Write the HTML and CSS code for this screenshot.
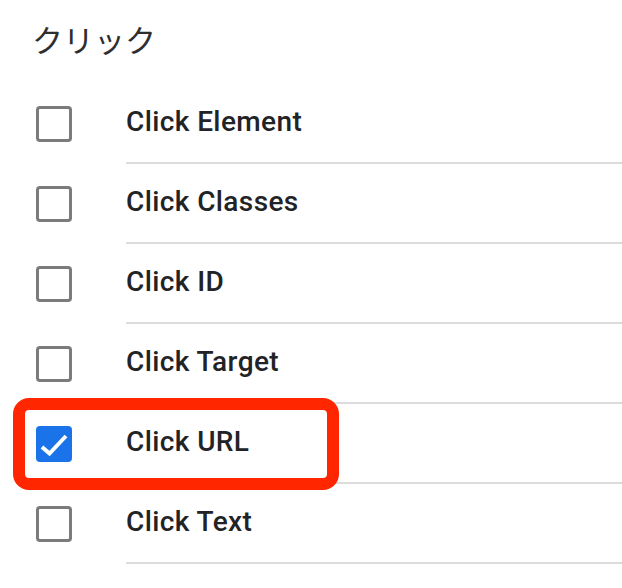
FILE: index.html
```html
<!DOCTYPE html>
<html lang="ja">
<head>
<meta charset="utf-8">
<link rel="stylesheet" href="styles.css">
</head>
<body>
<div class="panel">
  <div class="title">クリック</div>
  <ul class="list">
    <li class="row">
      <span class="cb"><span class="box"></span></span>
      <span class="label">Click Element</span>
    </li>
    <li class="row">
      <span class="cb"><span class="box"></span></span>
      <span class="label">Click Classes</span>
    </li>
    <li class="row">
      <span class="cb"><span class="box"></span></span>
      <span class="label">Click ID</span>
    </li>
    <li class="row">
      <span class="cb"><span class="box"></span></span>
      <span class="label">Click Target</span>
    </li>
    <li class="row highlighted">
      <span class="cb"><span class="box checked">
        <svg viewBox="0 0 36 36" width="36" height="36"><polyline points="6,21 13.5,27.5 30,10" fill="none" stroke="#fff" stroke-width="4"/></svg>
      </span></span>
      <span class="label">Click URL</span>
      <span class="mark"></span>
    </li>
    <li class="row">
      <span class="cb"><span class="box"></span></span>
      <span class="label">Click Text</span>
    </li>
  </ul>
</div>
</body>
</html>
```
FILE: styles.css
```css
html, body {
  margin: 0;
  padding: 0;
  background: #ffffff;
}
.panel {
  width: 622px;
  height: 588px;
  overflow: hidden;
}
.title {
  font-family: "Noto Sans CJK JP", "Noto Sans", sans-serif;
  font-size: 31px;
  line-height: 32px;
  font-weight: 400;
  color: #2e2e2e;
  padding: 23px 0 0 32px;
  height: 61px;
}
.list {
  list-style: none;
  margin: 0;
  padding: 0;
}
.row {
  position: relative;
  display: flex;
  height: 80px;
}
.cb {
  width: 126px;
  padding-left: 36px;
  box-sizing: border-box;
  display: flex;
  align-items: center;
  flex: none;
}
.box {
  width: 36px;
  height: 36px;
  box-sizing: border-box;
  border: 3.5px solid #7b7b7b;
  border-radius: 4px;
  display: block;
}
.box.checked {
  border: none;
  background: #1a73e8;
  border-radius: 4px;
}
.box svg {
  display: block;
}
.label {
  flex: 1;
  display: flex;
  align-items: center;
  border-bottom: 2px solid #dcdcdc;
  padding-bottom: 3px;
  font-family: Roboto, "Liberation Sans", sans-serif;
  font-weight: 500;
  font-size: 28px;
  letter-spacing: 0.4px;
  color: #222326;
}
.mark {
  position: absolute;
  left: 13px;
  top: -6px;
  width: 326px;
  height: 92px;
  box-sizing: border-box;
  border: 12px solid #ff2600;
  border-radius: 16px;
}
```
